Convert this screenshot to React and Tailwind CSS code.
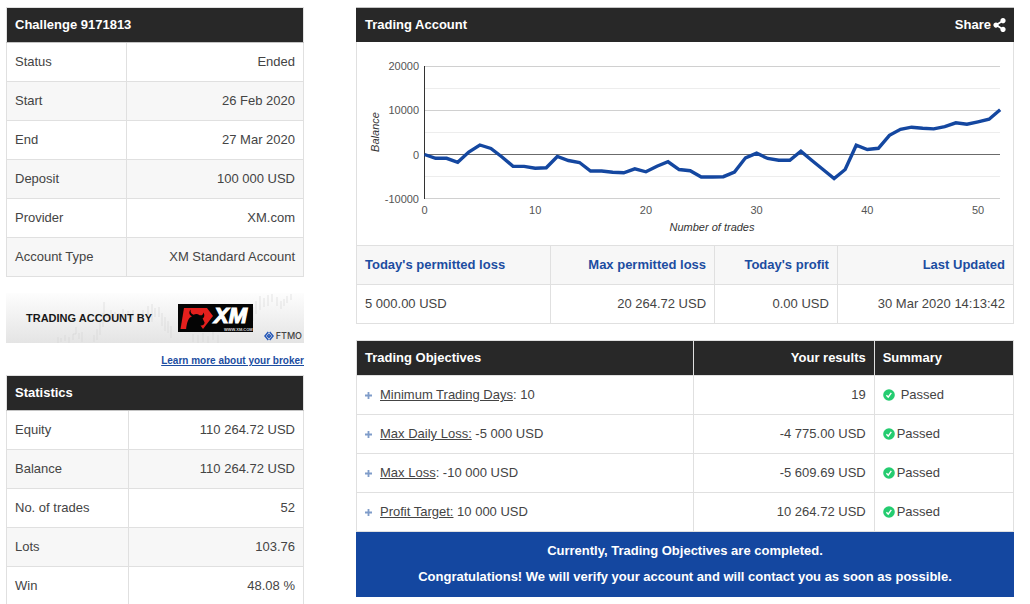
import { FaShareAlt } from 'react-icons/fa'

const challenge = [
  ['Status', 'Ended'],
  ['Start', '26 Feb 2020'],
  ['End', '27 Mar 2020'],
  ['Deposit', '100 000 USD'],
  ['Provider', 'XM.com'],
  ['Account Type', 'XM Standard Account'],
]

const statistics = [
  ['Equity', '110 264.72 USD'],
  ['Balance', '110 264.72 USD'],
  ['No. of trades', '52'],
  ['Lots', '103.76'],
  ['Win', '48.08 %'],
]

const objectives = [
  { label: 'Minimum Trading Days', after: ': 10', result: '19', gap: 'gap-[6px]' },
  { label: 'Max Daily Loss:', after: ' -5 000 USD', result: '-4 775.00 USD', gap: 'gap-[2px]' },
  { label: 'Max Loss', after: ': -10 000 USD', result: '-5 609.69 USD', gap: 'gap-[2px]' },
  { label: 'Profit Target:', after: ' 10 000 USD', result: '10 264.72 USD', gap: 'gap-[2px]' },
]

// Profit after each trade, starting from zero
const balance = [
  0, -860, -860, -1770, 570, 2150, 1360, -570, -2670, -2690, -3100, -3010, -450, -1360, -1810,
  -3730, -3730, -4030, -4140, -3240, -3910, -2650, -1650, -3400, -3670, -5090, -5090, -5020,
  -3960, -750, 290, -900, -1310, -1290, 750, -1360, -3400, -5430, -3400, 2100, 1130, 1400, 4340,
  5700, 6180, 5930, 5790, 6290, 7170, 6860, 7400, 7990, 10110,
]

const chartX = (n) => 67.5 + n * 11.07
const chartY = (v) => 112.5 - v * 0.00442

function BalanceChart() {
  const points = balance.map((v, i) => `${chartX(i)},${chartY(v)}`).join(' ')
  return (
    <svg viewBox="0 0 656 203" className="block w-full text-[11px]" role="img" aria-label="Balance">
      {[15000, 5000, -5000].map((v) => (
        <line key={v} x1="68" x2="643" y1={Math.floor(chartY(v)) + 0.5} y2={Math.floor(chartY(v)) + 0.5} stroke="#ededed" />
      ))}
      {[20000, 10000, -10000].map((v) => (
        <line key={v} x1="68" x2="643" y1={Math.floor(chartY(v)) + 0.5} y2={Math.floor(chartY(v)) + 0.5} stroke="#d0d0d0" />
      ))}
      <line x1="67" x2="643" y1="112.5" y2="112.5" stroke="#6b6b6b" />
      <line x1="67.5" x2="67.5" y1="24" y2="157" stroke="#333" />
      <polyline points={points} fill="none" stroke="#1447a0" strokeWidth="3.4" />
      {[20000, 10000, 0, -10000].map((v) => (
        <text key={v} x="62" y={chartY(v) + 4} textAnchor="end" fill="#555">{v}</text>
      ))}
      {[0, 10, 20, 30, 40, 50].map((n) => (
        <text key={n} x={chartX(n)} y="172" textAnchor="middle" fill="#555">{n}</text>
      ))}
      <text x="355" y="189" textAnchor="middle" fill="#333" fontStyle="italic">Number of trades</text>
      <text transform="translate(22 90) rotate(-90)" textAnchor="middle" fill="#333" fontStyle="italic">Balance</text>
    </svg>
  )
}

function InfoTable({ title, rows, labelWidth }) {
  return (
    <table className="w-full table-fixed border-collapse border border-[#e0e0e0]">
      <colgroup>
        <col className={labelWidth} />
        <col />
      </colgroup>
      <thead>
        <tr>
          <th colSpan={2} className="h-[35px] border-b border-[#c4c4c4] bg-[#282828] px-2 text-left text-white">{title}</th>
        </tr>
      </thead>
      <tbody>
        {rows.map(([label, value]) => (
          <tr key={label} className="even:bg-[#f7f7f7]">
            <td className="h-[39px] border border-[#e0e0e0] px-2">{label}</td>
            <td className="h-[39px] border border-[#e0e0e0] px-2 text-right">{value}</td>
          </tr>
        ))}
      </tbody>
    </table>
  )
}

function XmLogo() {
  return (
    <svg width="75" height="28" viewBox="0 0 75 28" className="block" role="img" aria-label="XM">
      <rect width="75" height="28" fill="#050505" />
      <path d="M6 4H29L35 12L25 25H2.5Z" fill="#e5201d" />
      <path d="M12.6 5.5C10.5 8 11 11 14 12.2C10.5 13.5 8.8 18 8 26H23L25 25L22.5 21.5C24.5 22 26.5 20.5 26.6 18.5L24.6 14.5C26.6 13.5 27 10.5 25.2 8.5C25.4 10.8 24 11.6 21.6 11.2C19.6 9.6 17.4 9.6 15.6 10.8C13.4 10 12.2 8.4 12.6 5.5Z" fill="#050505" />
      <text x="36" y="19" fill="#fff" fontSize="22" fontWeight="bold" fontStyle="italic" stroke="#fff" strokeWidth="1.2">XM</text>
      <text x="46" y="27" fill="#ddd" fontSize="4" fontWeight="bold">WWW.XM.COM</text>
    </svg>
  )
}

function BrokerBanner() {
  return (
    <div className="relative mt-4 flex h-[50px] items-center bg-linear-to-b from-[#fdfdfd] to-[#e4e4e4] pl-5">
      <svg viewBox="0 0 298 50" className="absolute inset-0 h-full w-full" fill="none" stroke="#d3d3d3" strokeWidth="0.6" aria-hidden="true">
        <path d="M52 50V44M55 49V45M59 48V42M63 50V44M67 47V41H70V34M73 40V46M76 39V49M88 42V49M91 36V47M94 26V42M97 20V34M98 9V29M101 20V25M105 17V27M109 19V26M113 20V26M117 16V25M122 18V26M127 17V26M132 20V28M137 17V25M142 13V26M146 11V29M149 15V24M153 14V24M156 20V33M159 24V38M162 28V40M165 33V45M187 41V49M192 42V50M197 40V49M202 43V50M207 39V47M212 42V50M232 28V38M237 24V35M242 20V30M247 14V28M250 8V21M254 3V17M258 5V14M262 2V13M266 1V9M271 4V13M275 8V16M278 6V13M281 3V10M285 1V7" />
      </svg>
      <span className="relative w-[152px] text-[11px] font-bold text-[#181818]">TRADING ACCOUNT BY</span>
      <span className="relative">
        <XmLogo />
      </span>
      <span className="absolute right-[2px] bottom-[2px] flex items-center gap-[2px]">
        <svg width="10" height="10" viewBox="0 0 10 10" fill="none" stroke="#2457b8" strokeWidth="1.4" aria-hidden="true">
          <path d="M4.3 1L0.9 5L4.3 9M5.7 1L9.1 5L5.7 9M5 3.4L6.6 5L5 6.6L3.4 5Z" />
        </svg>
        <span className="font-['Inter','Liberation_Sans',sans-serif] text-[9px] leading-[10px] font-medium text-[#444]">FTMO</span>
      </span>
    </div>
  )
}

function PassedIcon() {
  return (
    <svg width="12" height="12" viewBox="0 0 12 12" fill="none" aria-hidden="true">
      <circle cx="6" cy="6" r="5.8" fill="#24cc70" />
      <path d="M3.4 6.3L5.2 8.1L8.3 3.8" stroke="#fff" strokeWidth="1.4" />
    </svg>
  )
}

export default function App() {
  return (
    <div className="flex h-screen items-start gap-[52px] overflow-hidden bg-white pt-[7px] pr-4 pl-[6px] font-['Liberation_Sans',Arial,sans-serif] text-[13px] leading-[18px] text-[#444]">
      <aside className="w-[298px] shrink-0">
        <InfoTable title="Challenge 9171813" rows={challenge} labelWidth="w-[120px]" />
        <BrokerBanner />
        <div className="mt-[9px] mb-[5px] text-right text-[10px]">
          <a href="#broker" className="font-bold text-[#1c4da1] underline">Learn more about your broker</a>
        </div>
        <InfoTable title="Statistics" rows={statistics} labelWidth="w-[122px]" />
      </aside>

      <main className="min-w-0 flex-1">
        <section>
          <header className="flex h-[35px] items-center justify-between border-t border-[#c4c4c4] bg-[#282828] px-2 pl-[9px] font-bold text-white">
            <h2>Trading Account</h2>
            <button type="button" className="flex items-center gap-[2px] font-bold">
              Share <FaShareAlt className="h-[14px] w-[13px]" />
            </button>
          </header>
          <div className="border-x border-[#e0e0e0]">
            <BalanceChart />
          </div>
          <table className="w-full table-fixed border-collapse">
            <thead>
              <tr className="bg-[#f7f7f7] text-right text-[#1c4da1]">
                <th className="h-[39px] w-[29.5%] border border-[#e0e0e0] px-2 text-left">Today's permitted loss</th>
                <th className="w-[25%] border border-[#e0e0e0] px-2">Max permitted loss</th>
                <th className="w-[18.7%] border border-[#e0e0e0] px-2">Today's profit</th>
                <th className="border border-[#e0e0e0] px-2">Last Updated</th>
              </tr>
            </thead>
            <tbody>
              <tr className="text-right">
                <td className="h-[39px] border border-[#e0e0e0] px-2 text-left">5 000.00 USD</td>
                <td className="border border-[#e0e0e0] px-2">20 264.72 USD</td>
                <td className="border border-[#e0e0e0] px-2">0.00 USD</td>
                <td className="border border-[#e0e0e0] px-2">30 Mar 2020 14:13:42</td>
              </tr>
            </tbody>
          </table>
        </section>

        <table className="mt-4 w-full table-fixed border-collapse border border-[#e0e0e0]">
          <thead>
            <tr className="bg-[#282828] text-left text-white">
              <th className="h-[35px] w-[51.3%] border-r border-[#e0e0e0] px-2">Trading Objectives</th>
              <th className="w-[27.5%] border-r border-[#e0e0e0] px-2 text-right">Your results</th>
              <th className="px-2">Summary</th>
            </tr>
          </thead>
          <tbody>
            {objectives.map((o) => (
              <tr key={o.label}>
                <td className="h-[39px] border border-[#e0e0e0] px-2">
                  <div className="flex items-center gap-2">
                    <button type="button" aria-label="Expand">
                      <svg width="7" height="7" viewBox="0 0 7 7" stroke="#7f9cc9" strokeWidth="1.8" aria-hidden="true">
                        <path d="M0 3.5H7M3.5 0V7" />
                      </svg>
                    </button>
                    <span>
                      <a href="#objective" className="underline">{o.label}</a>
                      {o.after}
                    </span>
                  </div>
                </td>
                <td className="border border-[#e0e0e0] px-2 text-right">{o.result}</td>
                <td className="border border-[#e0e0e0] px-2">
                  <div className={`flex items-center ${o.gap}`}>
                    <PassedIcon />
                    <span>Passed</span>
                  </div>
                </td>
              </tr>
            ))}
          </tbody>
          <tfoot>
            <tr>
              <td colSpan={3} className="border border-[#1447a0] bg-[#1447a0] py-[6px] text-center leading-[26px] font-bold text-white">
                <p>Currently, Trading Objectives are completed.</p>
                <p>Congratulations! We will verify your account and will contact you as soon as possible.</p>
              </td>
            </tr>
          </tfoot>
        </table>
      </main>
    </div>
  )
}
